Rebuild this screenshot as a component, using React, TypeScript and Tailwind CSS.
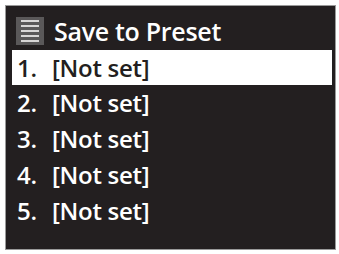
import React from 'react';

const presets = [1, 2, 3, 4, 5];

function MenuIcon() {
  return (
    <div className="flex h-[28px] w-[28px] flex-col items-center justify-center gap-[3px] bg-[#5a5859]">
      <div className="h-[2px] w-[18px] bg-[#d8d6d6]" />
      <div className="h-[2px] w-[18px] bg-[#d8d6d6]" />
      <div className="h-[2px] w-[18px] bg-[#d8d6d6]" />
      <div className="h-[2px] w-[18px] bg-[#d8d6d6]" />
      <div className="h-[2px] w-[18px] bg-[#d8d6d6]" />
    </div>
  );
}

export default function App() {
  return (
    <div
      className="h-[254px] w-[339px] bg-white p-[6px] pr-[4px] pb-[5px]"
      style={{ fontFamily: '"Open Sans", "Liberation Sans", sans-serif' }}
    >
      <div className="flex h-full w-full flex-col bg-[#231f20] shadow-[0_0_0_1px_#9a9a9a]">
        <div className="flex h-[44px] items-center gap-[10px] pl-[10px] pt-[6px]">
          <MenuIcon />
          <span className="text-[25px] font-semibold leading-none tracking-[-0.3px] text-white">
            Save to Preset
          </span>
        </div>
        <div className="flex flex-col">
          {presets.map((n) => (
            <div
              key={n}
              className={
                n === 1
                  ? 'mx-[6px] mr-[3px] flex h-[35px] items-center bg-white text-[#231f20]'
                  : 'mx-[6px] mr-[3px] flex h-[36px] items-center text-white'
              }
            >
              <span className="w-[40px] pl-[5px] text-[24px] font-semibold leading-none tracking-[-0.3px]">
                {n}.
              </span>
              <span className="text-[24px] font-semibold leading-none tracking-[-0.3px]">[Not set]</span>
            </div>
          ))}
        </div>
      </div>
    </div>
  );
}
